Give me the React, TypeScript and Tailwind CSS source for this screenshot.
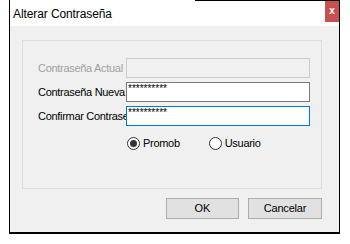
import React from "react";

const font = { fontFamily: '"Liberation Sans", Arial, sans-serif' };

function Row({ label, disabled, focused }: { label: string; disabled?: boolean; focused?: boolean }) {
  return (
    <div className="flex items-center h-[20px]">
      <div
        className={`w-[88px] overflow-hidden whitespace-nowrap text-[11px] tracking-[-0.3px] leading-[20px] ${
          disabled ? "text-[#a0a0a0]" : "text-black"
        }`}
      >
        {label}
      </div>
      <div
        className={`w-[184px] h-[20px] border ${
          disabled
            ? "border-[#cccccc] bg-[#f0f0f0]"
            : focused
            ? "border-[#0078d7] bg-white"
            : "border-[#7a7a7a] bg-white"
        } text-[10px] leading-[12px] pl-[1px] text-black`}
      >
        {disabled ? "" : "**********"}
      </div>
    </div>
  );
}

function Radio({ label, checked }: { label: string; checked?: boolean }) {
  return (
    <div className="flex items-center gap-[3px]">
      <div className="w-[13px] h-[13px] rounded-full border border-[#333333] bg-white flex items-center justify-center">
        {checked && <div className="w-[7px] h-[7px] rounded-full bg-[#333333]" />}
      </div>
      <span className="text-[11px] tracking-[-0.3px] text-black">{label}</span>
    </div>
  );
}

export default function App() {
  return (
    <div className="w-[350px] h-[244px] bg-white relative" style={font}>
      <div className="absolute left-[195px] top-0 w-[145px] h-[1px] bg-black" />
      <div className="ml-[9px] w-[331px] h-[234px] border-l border-r border-b-2 border-black flex flex-col">
        <div className="h-[26px] bg-white flex items-start justify-between">
          <div className="pl-[3px] pt-[5px] text-[12px] tracking-[-0.1px] text-black">Alterar Contraseña</div>
          <div className="w-[14px] h-[22px] bg-[#c75050] text-white text-[10px] font-bold flex items-center justify-center leading-none">
            x
          </div>
        </div>
        <div className="flex-1 bg-[#f0f0f0] flex flex-col pl-[12px] pt-[14px]">
          <div className="w-[300px] h-[149px] border border-[#dcdcdc] flex flex-col pt-[17px] pl-[15px] gap-[4px]">
            <Row label="Contraseña Actual" disabled />
            <Row label="Contraseña Nueva" />
            <Row label="Confirmar Contraseña" focused />
            <div className="flex items-center pl-[89px] pt-[5px] gap-[29px]">
              <Radio label="Promob" checked />
              <Radio label="Usuario" />
            </div>
          </div>
          <div className="w-[300px] flex justify-end gap-[9px] mt-[9px]">
            <div className="w-[73px] h-[21px] bg-[#e1e1e1] border border-[#adadad] flex items-center justify-center text-[11px] text-black">
              OK
            </div>
            <div className="w-[74px] h-[21px] bg-[#e1e1e1] border border-[#adadad] flex items-center justify-center text-[11px] tracking-[-0.2px] text-black">
              Cancelar
            </div>
          </div>
        </div>
      </div>
    </div>
  );
}
